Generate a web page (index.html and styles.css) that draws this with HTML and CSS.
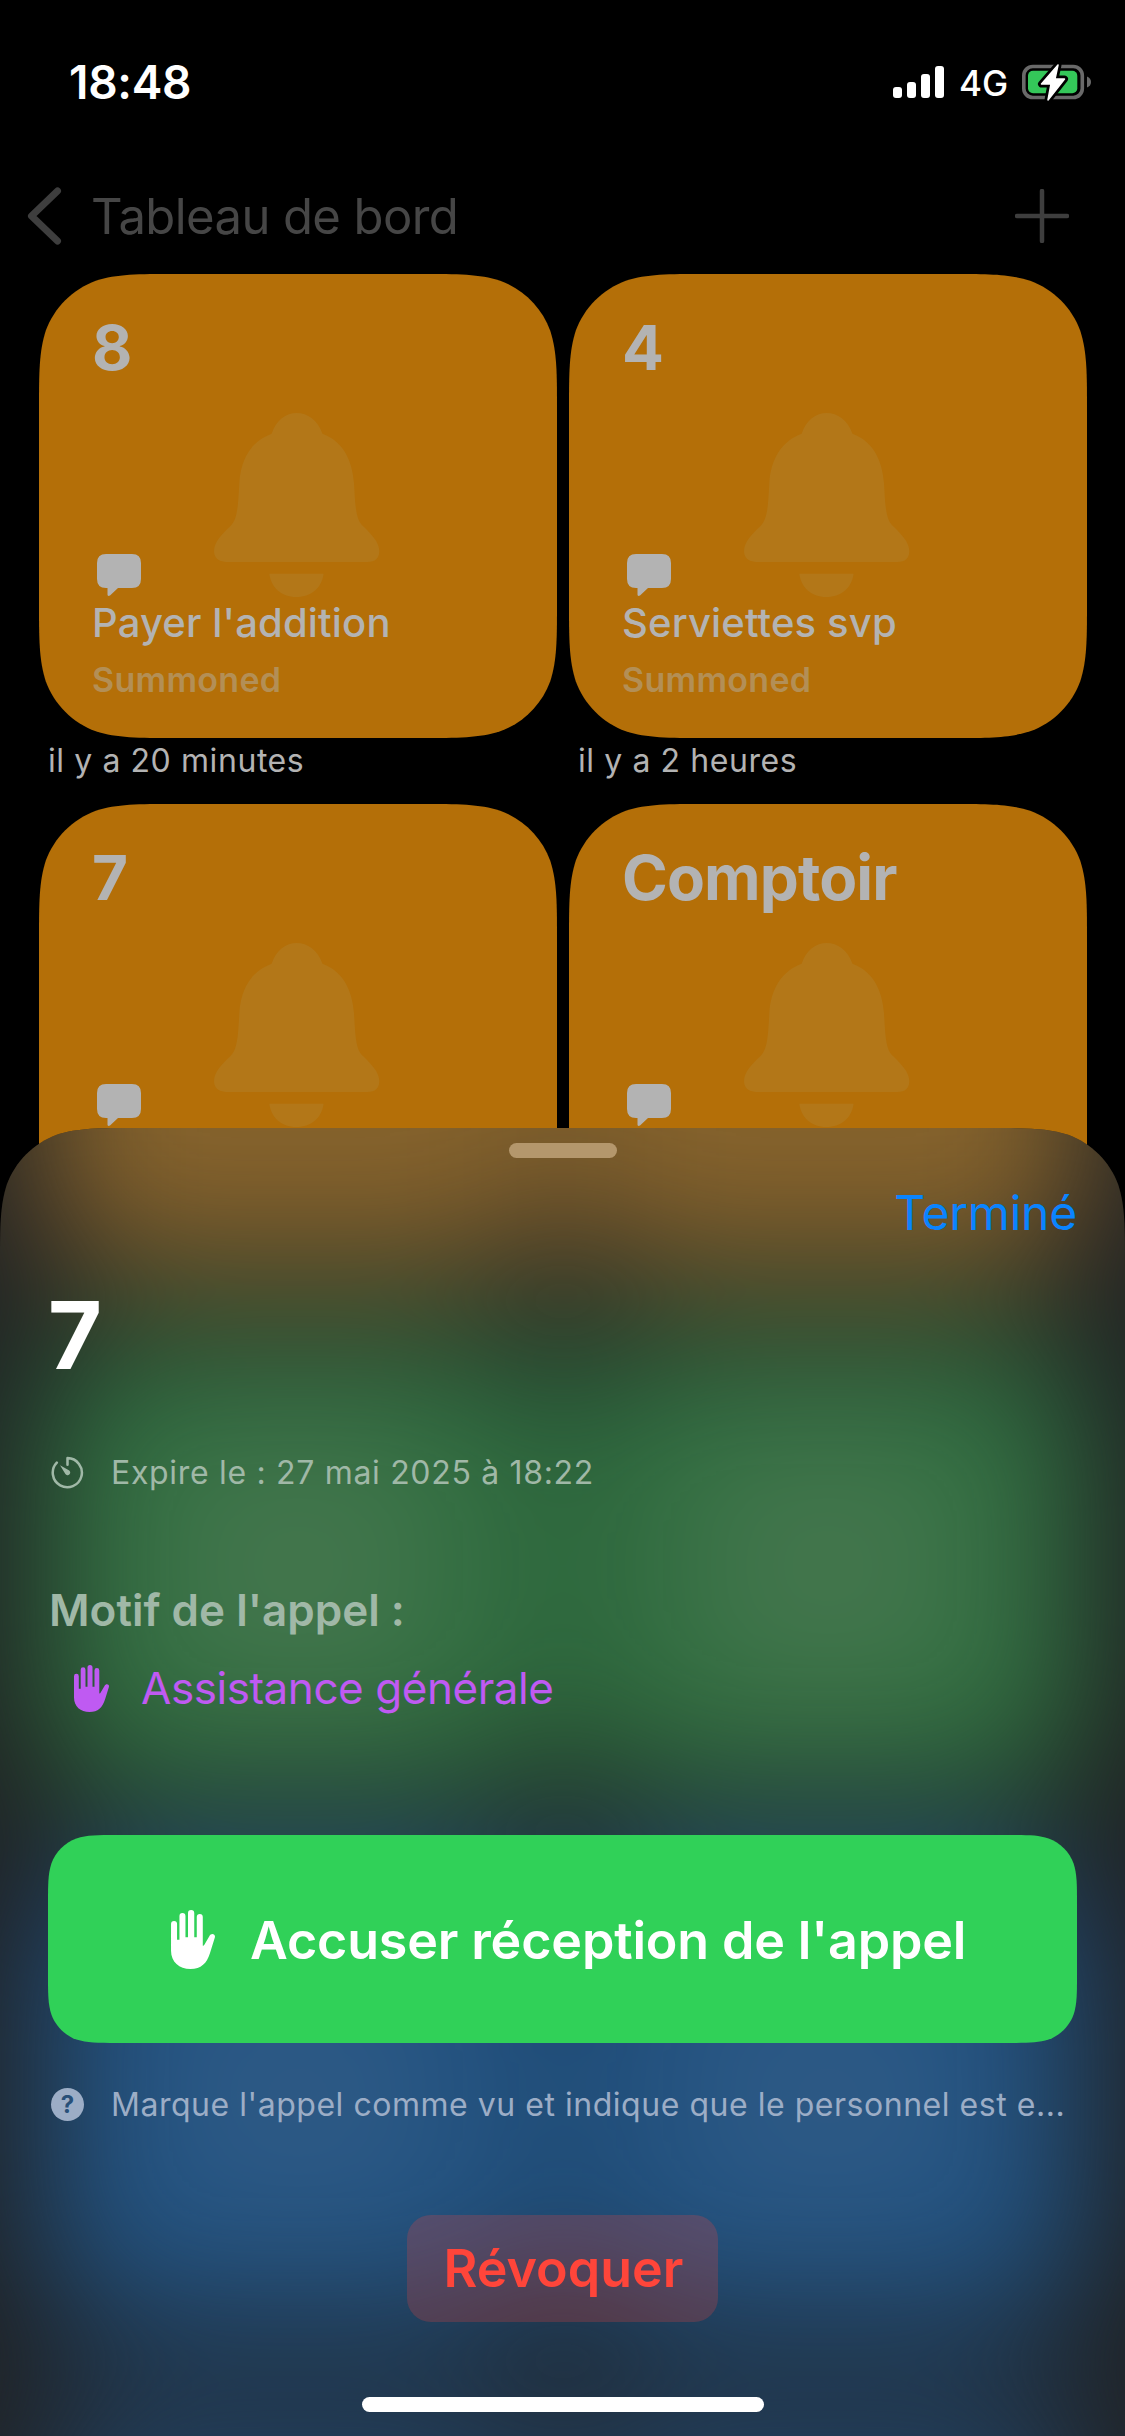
FILE: index.html
```html
<!DOCTYPE html>
<html lang="fr">
<head>
<meta charset="utf-8">
<title>Tableau de bord</title>
<link rel="stylesheet" href="styles.css">
</head>
<body>
<svg class="defs" width="0" height="0" aria-hidden="true">
  <symbol id="hand" viewBox="0 0 35 47">
    <path d="M0 11.200a2.400 2.400 0 0 1 4.800 0V23.700h1.900V4.700a2.400 2.400 0 0 1 4.800 0V21.800h2V2.500a2.500 2.500 0 0 1 5 0V21.800h2V5.500a2.400 2.400 0 0 1 4.800 0V28.500q1 0 1.500-1.200L30.500 21c1.200-3 5.200-2.200 4.400 1L31 34.500C28.500 42.500 24 47 15.500 47 6.500 47 0 41.500 0 32.500z"/>
  </symbol>
  <symbol id="bell" viewBox="0 0 166 192">
    <path d="M12 149Q0 148 0 138C0 129 8 121 16 113.500C23 107 24 96 25.300 70C27 45 38 28 57.600 20.700C62 7 72 0 82.700 0S104 7 108.500 20.700C128 28 138 45 140 70C141.500 96 142 107 149.500 113.500C157 121 165.300 129 165.300 138Q165 149 153.500 149zM55.300 160.700h54.300C108 174 98 184 82.500 184S57 174 55.300 160.700z"/>
  </symbol>
  <symbol id="bubble" viewBox="0 0 44 42">
    <path d="M9 0h26q9 0 9 9v16q0 9-9 9H21l-8 7.500q-2.500 1.300-2.500-1V34H9q-9 0-9-9V9Q0 0 9 0z"/>
  </symbol>
</svg>
<div class="screen">
  <header class="status">
    <span class="clock">18:48</span>
    <div class="indicators">
      <svg class="signal" viewBox="0 0 51 34"><rect x="0" y="21" width="9" height="11" rx="3"/><rect x="14" y="16" width="9" height="16" rx="3"/><rect x="28" y="8" width="9" height="24" rx="3"/><rect x="42" y="0" width="9" height="32" rx="3"/></svg>
      <span class="network">4G</span>
      <svg class="battery" viewBox="0 0 72 38"><rect x="2.800" y="2.500" width="58.500" height="31" rx="9" fill="none" stroke="#696969" stroke-width="3.600"/><path d="M66 12.500q4 1.500 4 5.500t-4 5.500z" fill="#696969"/><rect x="7" y="6.700" width="49.300" height="22.500" rx="5" fill="#34c759"/><path d="M37 1L20.500 20H30L27 36 43.500 15H34z" fill="#000" stroke="#000" stroke-width="7" stroke-linejoin="round"/><path d="M37 1L20.500 20H30L27 36 43.500 15H34z" fill="#fff" stroke="#fff" stroke-width="1.500" stroke-linejoin="round"/></svg>
    </div>
  </header>
  <nav class="nav">
    <svg class="chevron" viewBox="0 0 36 58"><path d="M30.500 4L4.500 29l26 25"/></svg>
    <span class="nav-title">Tableau de bord</span>
    <svg class="plus" viewBox="0 0 54 54"><path d="M27 2v50M2 27h50"/></svg>
  </nav>
  <main class="grid">
    <div class="cell">
      <article class="card"><svg class="bell"><use href="#bell"/></svg><h2>8</h2><svg class="bubble"><use href="#bubble"/></svg><p class="reason">Payer l'addition</p><p class="state">Summoned</p></article>
      <p class="ago">il y a 20 minutes</p>
    </div>
    <div class="cell">
      <article class="card"><svg class="bell"><use href="#bell"/></svg><h2>4</h2><svg class="bubble"><use href="#bubble"/></svg><p class="reason">Serviettes svp</p><p class="state">Summoned</p></article>
      <p class="ago">il y a 2 heures</p>
    </div>
    <div class="cell">
      <article class="card"><svg class="bell"><use href="#bell"/></svg><h2>7</h2><svg class="bubble"><use href="#bubble"/></svg></article>
    </div>
    <div class="cell">
      <article class="card"><svg class="bell"><use href="#bell"/></svg><h2>Comptoir</h2><svg class="bubble"><use href="#bubble"/></svg></article>
    </div>
  </main>
  <section class="sheet">
    <div class="glow" aria-hidden="true">
      <i class="orange"></i><i class="orange"></i>
      <i class="green"></i><i class="green"></i>
      <i class="blue"></i><i class="blue"></i>
      <i class="navy"></i><i class="navy"></i>
    </div>
    <div class="grabber"></div>
    <a class="done">Terminé</a>
    <h1>7</h1>
    <div class="info expires">
      <svg class="info-icon" viewBox="0 0 34 34"><path d="M17 9V2.200A15 15 0 1 1 6 6.800" fill="none" stroke="currentColor" stroke-width="2.600" stroke-linecap="round" stroke-linejoin="round"/><path d="M9.300 9.600l9.500 5.400a2.700 2.700 0 1 1-4 3.500z" fill="currentColor"/></svg>
      <span>Expire le : 27 mai 2025 à 18:22</span>
    </div>
    <h3>Motif de l'appel :</h3>
    <div class="motive"><svg class="hand"><use href="#hand"/></svg><span>Assistance générale</span></div>
    <div class="ack"><svg class="hand"><use href="#hand"/></svg><span class="ack-label">Accuser réception de l'appel</span></div>
    <div class="info help">
      <span class="question">?</span>
      <span>Marque l'appel comme vu et indique que le personnel est e...</span>
    </div>
    <div class="revoke"><span>Révoquer</span></div>
    <div class="home"></div>
  </section>
</div>
</body>
</html>
```
FILE: styles.css
```css
* { box-sizing: border-box; }
body { margin: 0; background: #000; font-family: Inter, "Liberation Sans", sans-serif; }
h1, h2, h3, p { margin: 0; }
svg { display: block; flex: none; }
span, a, p, h1, h2, h3 { white-space: nowrap; }
.defs { position: absolute; }
.screen { position: relative; width: 1125px; height: 2436px; overflow: hidden; background: #000; }

/* Status bar */
.status { display: flex; justify-content: space-between; height: 166px; padding: 58px 32px 0 69px; color: #fff; }
.clock { font-size: 46px; font-weight: 600; line-height: 48px; letter-spacing: -0.3px; }
.indicators { display: flex; height: 50px; align-items: center; }
.signal { width: 51px; height: 34px; fill: #fff; }
.network { margin-left: 15px; width: 62px; font-size: 35px; font-weight: 450; }
.battery { width: 72px; height: 38px; }

/* Navigation bar */
.nav { display: flex; align-items: center; height: 100px; padding: 0 56px 0 27px; color: #464646; }
.chevron { width: 36px; height: 58px; fill: none; stroke: #3e3e3e; stroke-width: 7; stroke-linecap: round; stroke-linejoin: round; }
.nav-title { margin-left: 28px; font-size: 49px; letter-spacing: -0.6px; flex: 1; }
.plus { width: 54px; height: 54px; fill: none; stroke: #3e3e3e; stroke-width: 4.500; stroke-linecap: round; }

/* Table cards, with continuous corners */
.grid { display: grid; grid-template-columns: 518px 518px; grid-auto-rows: 530px; column-gap: 12px; padding: 8px 0 0 39px; }
.card {
  position: relative; height: 464px; padding: 44px 53px 0; background: #b46f08; color: #b3b3b3;
  clip-path: path("M137.6 0H380.4C420.04 0 439.84 0 461.17 6.74C484.45 15.22 502.78 33.55 511.26 56.83C518 78.16 518 97.96 518 137.6V326.4C518 366.04 518 385.84 511.26 407.17C502.78 430.45 484.45 448.78 461.17 457.26C439.84 464 420.04 464 380.4 464H137.6C97.96 464 78.16 464 56.83 457.26C33.55 448.78 15.22 430.45 6.74 407.17C0 385.84 0 366.04 0 326.4V137.6C0 97.96 0 78.16 6.74 56.83C15.22 33.55 33.55 15.22 56.83 6.74C78.16 0 97.96 0 137.6 0Z");
}
.bell { position: absolute; left: 175px; top: 139px; width: 166px; height: 192px; fill: #b37718; }
.card h2 { position: relative; height: 60px; line-height: 60px; font-size: 62px; font-weight: 700; letter-spacing: -0.9px; }
.bubble { position: relative; width: 44px; height: 42px; margin: 176px 0 0 5px; fill: #b3b3b3; }
.reason { position: relative; margin-top: 2px; font-size: 40px; line-height: 50px; font-weight: 500; letter-spacing: 0.15px; }
.state { margin-top: 9px; font-size: 34px; line-height: 46px; font-weight: 570; letter-spacing: 0.3px; color: #b38f56; }
.ago { padding-left: 9px; font-size: 32px; line-height: 46px; letter-spacing: 0.58px; color: #b3b3b3; }

/* Detail sheet */
.sheet {
  position: absolute; left: 0; top: 1128px; width: 1125px; height: 1308px; overflow: hidden; background: #202224;
  display: flex; flex-direction: column; padding: 0 48px; isolation: isolate;
  clip-path: path("M137.6 0H987.4C1027.04 0 1046.84 0 1068.17 6.74C1091.45 15.22 1109.78 33.55 1118.26 56.83C1125 78.16 1125 97.96 1125 137.6V1308H0V137.6C0 97.96 0 78.16 6.74 56.83C15.22 33.55 33.55 15.22 56.83 6.74C78.16 0 97.96 0 137.6 0Z");
}
.glow { position: absolute; z-index: -1; left: 39px; top: -324px; display: grid; grid-template-columns: 518px 518px; grid-auto-rows: 464px; gap: 66px 12px; filter: blur(72px); }
.glow i { border-radius: 84px; }
.orange { background: #86632c; }
.green { background: radial-gradient(circle, #4d7953 0, #2e6e3f 65%); }
.blue { background: radial-gradient(circle, #335d87 0, #205180 65%); }
.navy { background: #22405f; }
.grabber { width: 108px; height: 15px; margin: 15px auto 0; border-radius: 8px; background: #b4976c; flex: none; }
.done { align-self: flex-end; margin-top: 26px; font-size: 48px; line-height: 58px; padding-bottom: 2px; letter-spacing: -0.2px; color: #0a84ff; }
h1 { margin-top: 35px; font-size: 93px; line-height: 112px; height: 110px; font-weight: 700; color: #fff; }
.info { display: flex; align-items: center; height: 44px; gap: 27px; padding-left: 3px; font-size: 32px; color: #a0b8a7; }
.info-icon { width: 33px; height: 33px; }
.expires { margin-top: 61px; letter-spacing: 0.68px; }
h3 { margin-top: 88px; padding-left: 1px; font-size: 44px; line-height: 56px; font-weight: 600; color: #a0b8a7; }
.motive { display: flex; align-items: center; gap: 32px; height: 56px; margin-top: 22px; padding-left: 26px; font-size: 44px; letter-spacing: -0.45px; color: #bf5af2; }
.hand { width: 35px; height: 47px; fill: currentColor; }
.ack {
  display: flex; align-items: center; height: 208px; margin-top: 119px; padding-left: 123px; background: #30d158; color: #fff;
  font-size: 52px; font-weight: 600; letter-spacing: -0.16px; gap: 35px; flex: none;
  clip-path: path("M68.8 0H960.2C980 0 989.9 0 1000.6 3.4C1012.2 7.6 1021.4 16.8 1025.6 28.4C1029 39.1 1029 49 1029 68.8V139.2C1029 159 1029 168.9 1025.6 179.6C1021.4 191.2 1012.2 200.4 1000.6 204.6C989.9 208 980 208 960.2 208H68.8C49 208 39.1 208 28.4 204.6C16.8 200.4 7.6 191.2 3.4 179.6C0 168.9 0 159 0 139.2V68.8C0 49 0 39.1 3.4 28.4C7.6 16.8 16.8 7.6 28.4 3.4C39.1 0 49 0 68.8 0Z");
}
.ack .hand { width: 44px; height: 59px; }
.ack-label { padding-top: 2px; }
.help { margin-top: 39px; letter-spacing: 0.53px; color: #9cadc6; }
.question { display: flex; justify-content: center; align-items: center; width: 33px; height: 33px; border-radius: 50%; background: #9cadc6; color: #285079; font-size: 24px; font-weight: 700; letter-spacing: 0; }
.revoke { display: flex; align-items: center; justify-content: center; align-self: center; width: 311px; height: 107px; margin-top: 89px; padding-left: 2px; border-radius: 24px; background: rgba(255, 69, 58, 0.22); font-size: 52px; font-weight: 600; color: #ff453a; flex: none; }
.home { width: 402px; height: 15px; margin: 75px auto 0; border-radius: 8px; background: #fff; flex: none; }
```
